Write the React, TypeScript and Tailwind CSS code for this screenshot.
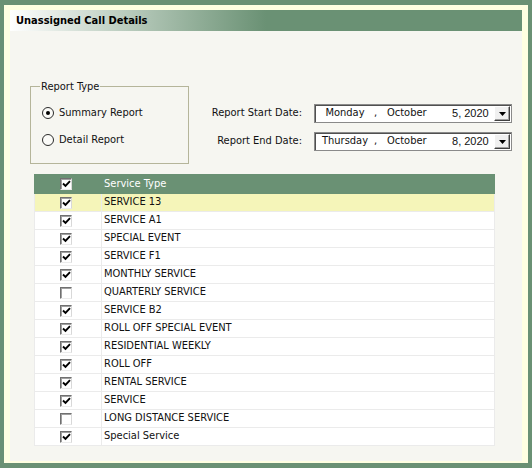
import { FC } from 'react';

const services: { name: string; checked: boolean }[] = [
  { name: 'SERVICE 13', checked: true },
  { name: 'SERVICE A1', checked: true },
  { name: 'SPECIAL EVENT', checked: true },
  { name: 'SERVICE F1', checked: true },
  { name: 'MONTHLY SERVICE', checked: true },
  { name: 'QUARTERLY SERVICE', checked: false },
  { name: 'SERVICE B2', checked: true },
  { name: 'ROLL OFF SPECIAL EVENT', checked: true },
  { name: 'RESIDENTIAL WEEKLY', checked: true },
  { name: 'ROLL OFF', checked: true },
  { name: 'RENTAL SERVICE', checked: true },
  { name: 'SERVICE', checked: true },
  { name: 'LONG DISTANCE SERVICE', checked: false },
  { name: 'Special Service', checked: true },
];

const CheckBox: FC<{ checked: boolean }> = ({ checked }) => (
  <div className="flex h-[12px] w-[12px] items-center justify-center border border-t-[#707070] border-l-[#707070] border-r-[#d8d8d8] border-b-[#ececec] bg-white shadow-[inset_1px_1px_0_#a0a0a0]">
    {checked && (
      <svg width="9" height="8" viewBox="0 0 9 8">
        <path d="M1 3.5 L3.5 6 L8 1.2" fill="none" stroke="#000" strokeWidth="1.9" />
      </svg>
    )}
  </div>
);

const Radio: FC<{ selected: boolean; label: string }> = ({ selected, label }) => (
  <div className="flex items-center gap-[5px]">
    <div className="flex h-[12px] w-[12px] items-center justify-center rounded-full border border-[#2a2a2a] bg-[#fbfbf8]">
      {selected && <div className="h-[4px] w-[4px] rounded-full bg-black" />}
    </div>
    <span>{label}</span>
  </div>
);

const DateBox: FC<{ day: string; num: string }> = ({ day, num }) => (
  <div className="flex h-[19px] w-[198px] items-center border border-[#8a8a8a] bg-white pl-[1px] pr-[1px] shadow-[inset_1px_1px_0_#505050]">
    <span className="w-[58px] text-center">{day}</span>
    <span className="w-[13px]">,</span>
    <span className="w-[65px]">October</span>
    <span className="flex-1 font-['Liberation_Sans',sans-serif]">{num}, 2020</span>
    <div className="flex h-[15px] w-[16px] items-center justify-center border border-t-white border-l-white border-r-[#404040] border-b-[#404040] bg-[#f0f0f0] shadow-[inset_-1px_-1px_0_#a0a0a0]">
      <svg width="7" height="4" viewBox="0 0 7 4">
        <path d="M0 0 H7 L3.5 4 Z" fill="#000" />
      </svg>
    </div>
  </div>
);

export default function App() {
  return (
    <div className="h-[468px] w-[532px] bg-[#6a9174] px-[4px] pt-[5px] pb-[5px] font-['DejaVu_Sans_Condensed','Liberation_Sans',sans-serif] text-[11px] text-[#111]">
      <div className="h-[458px] border-t-[5px] border-r-[6px] border-b-[2px] border-l-[6px] border-[#ffffe1] bg-[#f6f6f1]">
        <div className="flex h-[21px] items-center bg-linear-to-r from-white to-[#6a9174] to-50% pl-[6px] pt-[1px] text-[11px] font-bold text-black">
          Unassigned Call Details
        </div>

        <div className="mt-[55px] flex items-start justify-between pl-[20px] pr-[10px]">
          <div className="relative h-[78px] w-[159px] border border-[#b5b59a]">
            <span className="absolute -top-[8px] left-[9px] bg-[#f6f6f1] px-[1px]">Report Type</span>
            <div className="flex flex-col gap-[10.5px] pt-[18px] pl-[11px]">
              <Radio selected label="Summary Report" />
              <Radio selected={false} label="Detail Report" />
            </div>
          </div>

          <div className="mt-[18px] grid grid-cols-[auto_198px] items-center gap-x-[12px] gap-y-[9px]">
            <span className="text-right">Report Start Date:</span>
            <DateBox day="Monday" num="5" />
            <span className="text-right">Report End Date:</span>
            <DateBox day="Thursday" num="8" />
          </div>
        </div>

        <div className="mt-[10px] ml-[24px] w-[461px]">
          <div className="flex h-[20px] items-center bg-[#6a9174] text-white">
            <div className="flex w-[68px] items-center pl-[26px]">
              <CheckBox checked />
            </div>
            <span className="pl-[2px]">Service Type</span>
          </div>
          {services.map((s, i) => (
            <div
              key={s.name}
              className={`flex h-[18px] items-center border-x border-b border-[#ebebeb] ${i === 0 ? 'bg-[#f5f5b9]' : 'bg-white'}`}
            >
              <div className="flex h-full w-[67px] items-center border-r border-[#ebebeb] pl-[25px]">
                <CheckBox checked={s.checked} />
              </div>
              <span className="pl-[2px]">{s.name}</span>
            </div>
          ))}
        </div>
      </div>
    </div>
  );
}
